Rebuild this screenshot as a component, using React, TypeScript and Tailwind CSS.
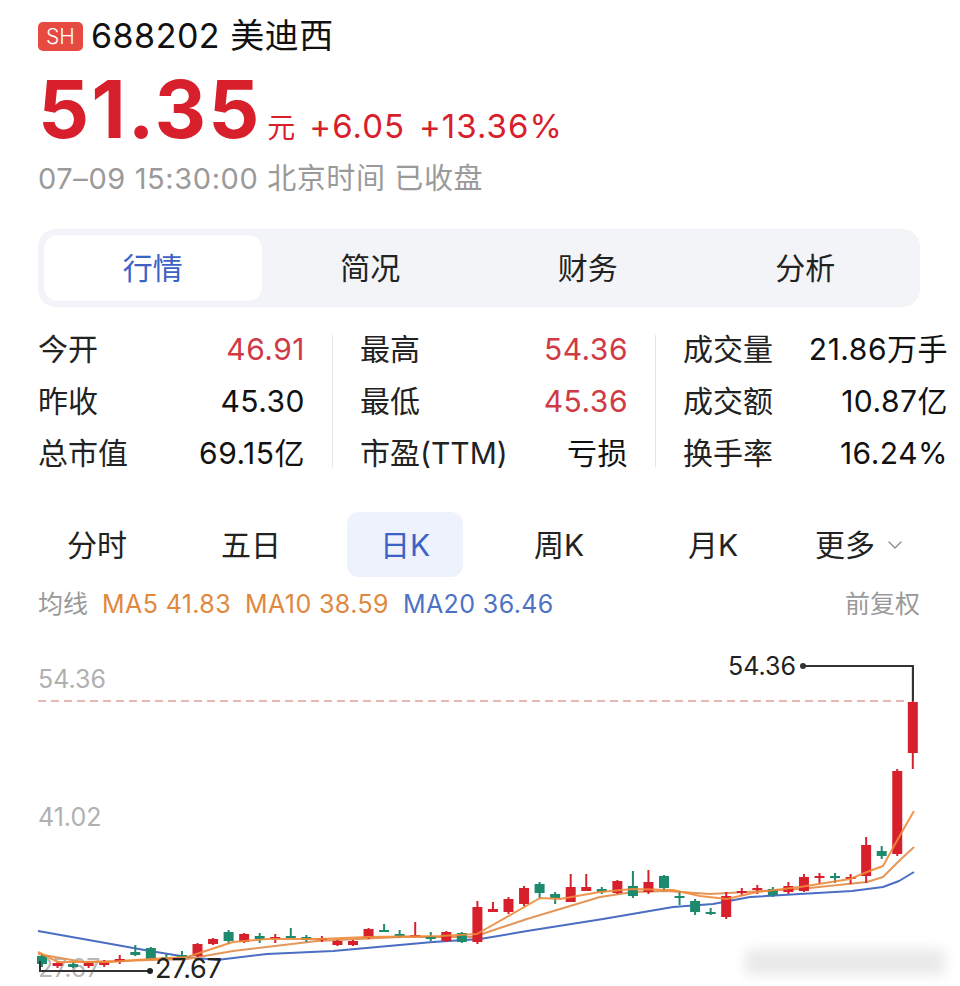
import { ChevronDown } from "lucide-react";

// Quote page for a single A-share: header, tab bar, stat grid and a daily candle chart.

const RED = "#d8202c";
const GREEN = "#1d8a6e";

type Candle = { x: number; top: number; bottom: number; hi: number; lo: number; up: boolean };

// [top, bottom, wickHigh, wickLow, up]
const RAW: [number, number, number, number, boolean][] = [
  [957, 965, 955, 968, false],
  [964, 967, 962, 969, true],
  [965, 968, 963, 969, false],
  [964, 967, 962, 969, true],
  [963, 966, 961, 968, true],
  [960, 963, 956, 965, true],
  [953, 956, 946, 957, false],
  [949, 960, 948, 961, false],
  [958, 960, 955, 962, false],
  [956, 958, 952, 960, false],
  [945, 957, 944, 958, true],
  [940, 945, 939, 946, true],
  [933, 942, 931, 945, false],
  [935, 943, 934, 944, true],
  [937, 940, 934, 944, false],
  [938, 940, 935, 944, true],
  [937, 939, 929, 939, false],
  [938, 941, 936, 943, false],
  [939, 941, 937, 943, true],
  [942, 946, 941, 947, true],
  [942, 946, 941, 947, true],
  [930, 939, 929, 940, true],
  [931, 933, 925, 933, false],
  [935, 937, 931, 939, false],
  [936, 938, 923, 938, true],
  [937, 940, 933, 942, false],
  [933, 942, 932, 943, true],
  [934, 943, 933, 944, false],
  [908, 943, 902, 945, true],
  [910, 913, 903, 913, true],
  [900, 913, 898, 915, true],
  [889, 905, 887, 907, true],
  [885, 894, 883, 899, false],
  [895, 899, 893, 905, false],
  [888, 903, 875, 903, true],
  [888, 892, 875, 892, true],
  [890, 893, 888, 895, false],
  [882, 894, 881, 895, true],
  [887, 897, 872, 899, false],
  [883, 893, 871, 895, true],
  [877, 889, 876, 892, false],
  [897, 899, 893, 906, false],
  [902, 913, 900, 916, false],
  [913, 915, 909, 916, false],
  [897, 918, 893, 920, true],
  [892, 894, 889, 897, true],
  [889, 891, 886, 895, true],
  [890, 896, 888, 898, false],
  [887, 893, 883, 895, true],
  [878, 892, 875, 893, true],
  [877, 879, 874, 885, true],
  [877, 879, 874, 884, false],
  [878, 880, 875, 885, true],
  [846, 877, 838, 884, true],
  [852, 857, 847, 860, false],
  [772, 855, 770, 857, true],
  [703, 754, 667, 770, true],
];

const CANDLES: Candle[] = RAW.map(([top, bottom, hi, lo, up], i) => ({
  x: 42 + i * 15.55,
  top,
  bottom,
  hi,
  lo,
  up,
}));

const MA5 = "38,953 58,963 110,963 150,960 187,958 233,943 267,940 320,940 367,938 440,937 477,935 540,899 560,900 600,893 633,890 673,891 700,897 727,900 757,893 800,888 850,880 867,873 883,867 899,838 914,812";
const MA10 = "38,955 83,963 187,960 233,952 317,942 400,938 473,938 527,920 600,898 633,893 667,892 710,895 800,890 867,883 883,878 899,862 914,848";
const MA20 = "38,932 100,943 150,952 187,958 217,961 267,955 333,952 433,943 480,940 527,932 603,920 673,908 713,905 750,898 800,895 852,892 883,888 899,882 914,873";

function KChart() {
  return (
    <svg width={960} height={366} viewBox="0 620 960 366" className="block">
      <defs>
        <filter id="smudge" x="-20%" y="-50%" width="140%" height="200%">
          <feGaussianBlur stdDeviation="6" />
        </filter>
      </defs>
      <g fontFamily="Inter, 'Noto Sans', sans-serif">
        <text x={38} y={689} fontSize={25} fill="#b0b0b0">54.36</text>
        <text x={38} y={827} fontSize={25} fill="#b0b0b0">41.02</text>
        <text x={38} y={978} fontSize={25} fill="#b8b8b8">27.67</text>
      </g>
      <line x1={38} y1={702} x2={905} y2={702} stroke="#e7b7b2" strokeWidth={2} strokeDasharray="8 5" />

      <polyline points={MA20} fill="none" stroke="#4b6dc2" strokeWidth={2} strokeLinejoin="round" />
      <polyline points={MA10} fill="none" stroke="#e4975a" strokeWidth={2} strokeLinejoin="round" />

      {CANDLES.map((c, i) => {
        const color = c.up ? RED : GREEN;
        return (
          <g key={i}>
            <line x1={c.x} y1={c.hi} x2={c.x} y2={c.lo} stroke={color} strokeWidth={2} />
            <rect x={c.x - 5} y={c.top} width={10} height={Math.max(2, c.bottom - c.top)} fill={color} />
          </g>
        );
      })}

      <polyline points={MA5} fill="none" stroke="#f08a3a" strokeWidth={2} strokeLinejoin="round" opacity={0.9} />

      {/* high marker */}
      <polyline points="803,667 913,667 913,702" fill="none" stroke="#333" strokeWidth={2} />
      <circle cx={803} cy={667} r={3} fill="#333" />
      <text x={728} y={676} fontSize={25} fill="#222" fontFamily="Inter, 'Noto Sans', sans-serif">54.36</text>

      {/* low marker */}
      <polyline points="40,962 40,972 150,972" fill="none" stroke="#333" strokeWidth={2} />
      <circle cx={150} cy={972} r={3} fill="#222" />
      <text x={155} y={979} fontSize={27} fill="#222" textLength={67} fontFamily="Inter, 'Noto Sans', sans-serif">
        27.67
      </text>

      <rect x={745} y={950} width={200} height={26} rx={4} fill="#dcdcdc" opacity={0.6} filter="url(#smudge)" />
    </svg>
  );
}

const STATS: [string, string, boolean][][] = [
  [
    ["今开", "46.91", true],
    ["昨收", "45.30", false],
    ["总市值", "69.15亿", false],
  ],
  [
    ["最高", "54.36", true],
    ["最低", "45.36", true],
    ["市盈(TTM)", "亏损", false],
  ],
  [
    ["成交量", "21.86万手", false],
    ["成交额", "10.87亿", false],
    ["换手率", "16.24%", false],
  ],
];

function StatColumn({ rows, width }: { rows: [string, string, boolean][]; width: string }) {
  return (
    <div className={`flex flex-col ${width}`}>
      {rows.map(([label, value, red]) => (
        <div key={label} className="flex h-[52px] items-center justify-between">
          <span className="text-[#222]">{label}</span>
          <span className={red ? "tracking-[0.5px] text-[#cf3a45]" : "tracking-[0.5px] text-[#111]"}>{value}</span>
        </div>
      ))}
    </div>
  );
}

const PERIODS = ["分时", "五日", "日K", "周K", "月K"];

export default function App() {
  return (
    <div
      className="w-[960px] h-[986px] overflow-hidden bg-white"
      style={{ fontFamily: "Inter, 'Noto Sans CJK SC', sans-serif" }}
    >
      <div className="px-[38px] pt-[16px]">
        <div className="flex h-[40px] items-center">
          <span className="flex h-[29px] w-[45px] items-center justify-center rounded-[5px] bg-[#e64a40] text-[21px] font-light leading-none text-white">
            SH
          </span>
          <span className="ml-[8px] text-[34px] tracking-[0.5px] leading-none text-[#111]">688202 美迪西</span>
        </div>
        <div className="mt-[13px] flex items-baseline leading-none text-[#d8202c]">
          <span className="text-[80px] font-bold tracking-[2px]">51.35</span>
          <span className="ml-[6px] text-[28px]">元</span>
          <span className="ml-[14px] text-[33px] tracking-[1px]">+6.05</span>
          <span className="ml-[14px] text-[33px] tracking-[1px]">+13.36%</span>
        </div>
        <div className="mt-[12px] h-[36px] text-[29px] leading-[36px] tracking-[0.6px] text-[#9a9a9a]">
          07–09 15:30:00 北京时间 已收盘
        </div>
      </div>

      <div className="mx-[38px] mt-[32px] flex h-[78px] w-[882px] rounded-[18px] bg-[#f2f4f8] p-[6px]">
        {["行情", "简况", "财务", "分析"].map((t, i) => (
          <div
            key={t}
            className={
              i === 0
                ? "flex flex-1 items-center justify-center rounded-[14px] bg-white text-[30px] text-[#3c62c6]"
                : "flex flex-1 items-center justify-center text-[30px] text-[#222]"
            }
          >
            {t}
          </div>
        ))}
      </div>

      <div className="mt-[16px] flex pl-[38px] text-[30px] leading-none">
        <StatColumn rows={STATS[0]} width="w-[267px]" />
        <div className="mx-[27px] my-[12px] w-px bg-[#e6e6e6]" />
        <StatColumn rows={STATS[1]} width="w-[268px]" />
        <div className="mx-[27px] my-[12px] w-px bg-[#e6e6e6]" />
        <StatColumn rows={STATS[2]} width="w-[265px]" />
      </div>

      <div className="mt-[33px] flex pl-[20px] text-[30px] leading-none text-[#222]">
        {PERIODS.map((p, i) => (
          <div key={p} className="flex w-[154px] justify-center">
            <div
              className={
                i === 2
                  ? "flex h-[65px] w-[116px] items-center justify-center rounded-[12px] bg-[#eef2fc] text-[#3c62c6]"
                  : "flex h-[65px] w-[116px] items-center justify-center"
              }
            >
              {p}
            </div>
          </div>
        ))}
        <div className="flex h-[65px] items-center gap-[8px] pl-[25px]">
          <span>更多</span>
          <ChevronDown size={24} strokeWidth={1.25} className="text-[#888]" />
        </div>
      </div>

      <div className="mt-[12px] flex h-[30px] items-center justify-between px-[38px] text-[25px] leading-none">
        <div className="flex items-center gap-[14px]">
          <span className="text-[#999]">均线</span>
          <span className="tracking-[0.4px] text-[#e0883e]">MA5 41.83</span>
          <span className="tracking-[0.4px] text-[#e0883e]">MA10 38.59</span>
          <span className="tracking-[0.4px] text-[#4d72c4]">MA20 36.46</span>
        </div>
        <span className="pr-[2px] text-[#999]">前复权</span>
      </div>

      <KChart />
    </div>
  );
}
